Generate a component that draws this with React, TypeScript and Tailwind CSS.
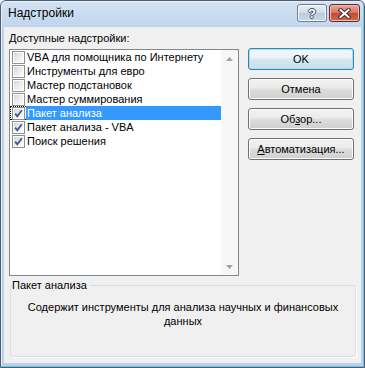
import React from 'react';

const items = [
  { label: 'VBA для помощника по Интернету', checked: false },
  { label: 'Инструменты для евро', checked: false },
  { label: 'Мастер подстановок', checked: false },
  { label: 'Мастер суммирования', checked: false },
  { label: 'Пакет анализа', checked: true, selected: true },
  { label: 'Пакет анализа - VBA', checked: true },
  { label: 'Поиск решения', checked: true },
];

function Check({ checked }: { checked: boolean }) {
  return (
    <span className="flex h-[13px] w-[13px] shrink-0 border border-[#8e8f8f] bg-white p-px">
      <span className="relative flex h-full w-full items-center justify-center bg-gradient-to-br from-[#d3d5d9] via-[#ebecee] to-[#fbfbfb]">
        {checked && (
          <svg width="9" height="9" viewBox="0 0 9 9" className="absolute">
            <path d="M1.2 4.6 L3.3 7.2 L7.8 1.3" fill="none" stroke="#45568a" strokeWidth="1.8" />
          </svg>
        )}
      </span>
    </span>
  );
}

function Button({ children, primary }: { children: React.ReactNode; primary?: boolean }) {
  return (
    <button
      className={
        primary
          ? 'flex h-[22px] w-[106px] items-center justify-center rounded-[3px] border border-[#3c7fb1] bg-[linear-gradient(#f2f8fb_0%,#e9f3f8_45%,#d6e8f1_50%,#c9dfea_100%)] text-[11px] text-black shadow-[inset_0_0_0_1px_#9fe0fb]'
          : 'flex h-[22px] w-[106px] items-center justify-center rounded-[3px] border border-[#707070] bg-[linear-gradient(#f2f2f2_0%,#ebebeb_45%,#dddddd_50%,#cfcfcf_100%)] text-[11px] text-black shadow-[inset_0_0_0_1px_#fcfcfc]'
      }
    >
      {children}
    </button>
  );
}

function ScrollArrow({ up }: { up?: boolean }) {
  return (
    <div className="flex h-[17px] items-center justify-center">
      <svg width="7" height="4" viewBox="0 0 7 4">
        <path d={up ? 'M0 4 L3.5 0 L7 4 Z' : 'M0 0 L3.5 4 L7 0 Z'} fill="#a2a2a2" />
      </svg>
    </div>
  );
}

export default function App() {
  return (
    <div
      className="flex h-[368px] w-[365px] flex-col rounded-t-[6px] border border-[#4f5d6c] bg-[linear-gradient(#d4e3f3,#bcd2ea_30px,#bcd2ea)] shadow-[inset_-1px_-1px_0_#64c6f1,inset_1px_1px_0_#e6f0fa]"
      style={{ fontFamily: '"Liberation Sans", Arial, sans-serif' }}
    >
      {/* заголовок */}
      <div className="flex h-[26px] shrink-0 items-start pl-[7px] pr-[4px]">
        <span className="mt-[5px] flex-1 text-[12px] leading-[15px] text-black">Надстройки</span>
        <div className="mt-[3px] flex gap-[2px]">
          <div className="flex h-[18px] w-[30px] items-center justify-center rounded-[3px] border border-[#6e7f93] bg-[linear-gradient(#e8eff7,#cfdcea_50%,#bccbde_51%,#c8d7e8)] shadow-[inset_0_0_0_1px_#f4f8fc]">
            <span
              className="text-[13px] font-bold leading-none text-white"
              style={{ textShadow: '1px 0 0 #3c4a5a, -1px 0 0 #3c4a5a, 0 1px 0 #3c4a5a, 0 -1px 0 #3c4a5a' }}
            >
              ?
            </span>
          </div>
          <div className="flex h-[18px] w-[31px] items-center justify-center rounded-[3px] border border-[#6b2a25] bg-[linear-gradient(#e8a99d,#d6735f_50%,#c34a33_51%,#cf6b50)] shadow-[inset_0_0_0_1px_#efb9ae]">
            <svg width="13" height="11" viewBox="0 0 13 11">
              <path d="M2.5 2 L10.5 9 M10.5 2 L2.5 9" stroke="#4a2a28" strokeWidth="4" strokeLinecap="square" />
              <path d="M2.5 2 L10.5 9 M10.5 2 L2.5 9" stroke="#ffffff" strokeWidth="2" strokeLinecap="square" />
            </svg>
          </div>
        </div>
      </div>

      {/* клиентская область */}
      <div className="mx-[3px] mb-[4px] flex flex-1 flex-col bg-[#f0f0f0] pl-[5px] pt-[5px] text-[11px] text-black">
        <div className="flex items-start">
          <div className="flex flex-col">
            <div className="h-[13px] leading-[13px]">
              <span className="underline underline-offset-[1px]">Д</span>оступные надстройки:
            </div>
            <div className="mt-[4px] flex h-[227px] w-[230px] border border-[#828790] bg-white">
              <div className="flex flex-1 flex-col">
                {items.map((it) => (
                  <div key={it.label} className="flex h-[14px] items-center">
                    <div
                      className={
                        it.selected
                          ? 'flex h-[14px] items-center border border-r-0 border-dotted border-black pl-[1px] pr-[1px]'
                          : 'flex h-[14px] items-center pl-[2px] pr-[1px]'
                      }
                    >
                      <Check checked={it.checked} />
                    </div>
                    <div
                      className={
                        it.selected
                          ? 'flex h-[14px] flex-1 items-center bg-[#3399ff] pl-[1px] leading-[14px] text-white'
                          : 'flex h-[14px] flex-1 items-center pl-[1px] leading-[14px]'
                      }
                    >
                      {it.label}
                    </div>
                  </div>
                ))}
              </div>
              <div className="flex w-[17px] flex-col justify-between bg-[#f7f7f7]">
                <ScrollArrow up />
                <ScrollArrow />
              </div>
            </div>
          </div>

          <div className="ml-[9px] mt-[16px] flex flex-col gap-[8px]">
            <Button primary>OK</Button>
            <Button>Отмена</Button>
            <Button>
              <span>
                Об<span className="underline underline-offset-[1px]">з</span>ор...
              </span>
            </Button>
            <Button>
              <span>
                <span className="underline underline-offset-[1px]">А</span>втоматизация...
              </span>
            </Button>
          </div>
        </div>

        <fieldset className="ml-[1px] mt-[3px] h-[78px] w-[346px] rounded-[3px] border border-[#d5dfe5] shadow-[1px_1px_0_#ffffff]">
          <legend className="ml-[1px] pr-[3px] leading-[13px]">Пакет анализа</legend>
          <div className="pt-[8px] text-center leading-[14px]">
            <div>Содержит инструменты для анализа научных и финансовых</div>
            <div>данных</div>
          </div>
        </fieldset>
      </div>
    </div>
  );
}
